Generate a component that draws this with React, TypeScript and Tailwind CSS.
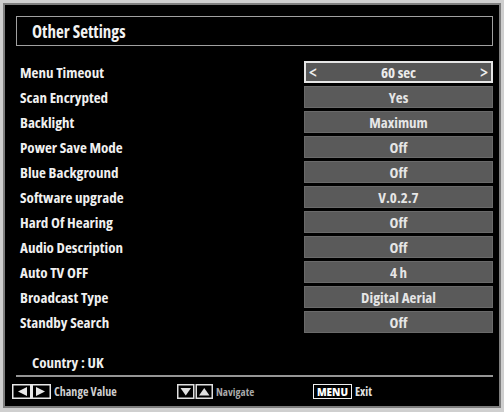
const rows: [string, string][] = [
  ["Menu Timeout", "60 sec"],
  ["Scan Encrypted", "Yes"],
  ["Backlight", "Maximum"],
  ["Power Save Mode", "Off"],
  ["Blue Background", "Off"],
  ["Software upgrade", "V.0.2.7"],
  ["Hard Of Hearing", "Off"],
  ["Audio Description", "Off"],
  ["Auto TV OFF", "4 h"],
  ["Broadcast Type", "Digital Aerial"],
  ["Standby Search", "Off"],
];

function LeftRightIcon() {
  return (
    <svg width="39" height="15" viewBox="0 0 39 15">
      <rect x="0.75" y="0.75" width="37.5" height="13.5" fill="#000" stroke="#e8e8e8" strokeWidth="1.5" />
      <rect x="18" y="0" width="3" height="15" fill="#e8e8e8" />
      <polygon points="15,3 15,12 6,7.5" fill="#e8e8e8" />
      <polygon points="24,3 24,12 33,7.5" fill="#e8e8e8" />
    </svg>
  );
}

function UpDownIcon() {
  return (
    <svg width="36" height="15" viewBox="0 0 36 15">
      <rect x="0.75" y="0.75" width="16" height="13.5" fill="#000" stroke="#e0e0e0" strokeWidth="1.5" />
      <polygon points="3.5,4 14,4 8.75,11.5" fill="#e0e0e0" />
      <rect x="19.25" y="0.75" width="16" height="13.5" fill="#000" stroke="#e0e0e0" strokeWidth="1.5" />
      <polygon points="22,11.5 32.5,11.5 27.25,4" fill="#e0e0e0" />
    </svg>
  );
}

export default function App() {
  return (
    <div
      className="w-[504px] h-[412px] bg-[#cfcfcf] pt-[3px] px-[3px] pb-[4px] [font-stretch:80%]"
      style={{ fontFamily: "'Open Sans', 'DejaVu Sans', sans-serif" }}
    >
      <div className="h-full border-2 border-[#7e7e7e] bg-black flex flex-col">
        <div className="pl-[11px] pr-[6px] flex flex-col">
          <div className="mt-[11px] h-[30px] border-[1.5px] border-[#a0a0a0] flex items-center pl-[15px]">
            <span className="text-[17px] font-bold text-[#f2f2f2] leading-none">Other Settings</span>
          </div>

          <div className="mt-[15px] flex flex-col gap-[3px]">
            {rows.map(([label, value], i) => (
              <div key={label} className="flex items-center h-[22px]">
                <div className="flex-1 pl-[4px] text-[15px] font-bold text-[#f0f0f0] leading-none">{label}</div>
                {i === 0 ? (
                  <div className="w-[189px] h-[22px] bg-[#575757] border-2 border-[#e6e6e6] flex items-center justify-between px-[3px] text-[15px] font-bold text-[#ececec] leading-none">
                    <span className="text-[17px] font-semibold">&lt;</span>
                    <span>{value}</span>
                    <span className="text-[17px] font-semibold">&gt;</span>
                  </div>
                ) : (
                  <div className="w-[189px] h-[22px] bg-[#5a5a5a] border border-[#6a6a6a] flex items-center justify-center text-[15px] font-bold text-[#e6e6e6] leading-none">
                    {value}
                  </div>
                )}
              </div>
            ))}
          </div>

          <div className="mt-[19px] h-[20px] flex items-center pl-[16px] text-[15px] font-bold text-[#eeeeee] leading-none">
            Country : UK
          </div>

          <div className="mt-[3px] h-[2px] bg-[#959595]"></div>
        </div>

        <div className="mt-[7px] pl-[7px] flex items-center h-[15px]">
          <div className="w-[165px] flex items-center gap-[3px]">
            <LeftRightIcon />
            <span className="text-[12px] font-bold text-[#cfcfcf] leading-none">Change Value</span>
          </div>
          <div className="w-[136px] flex items-center gap-[3px]">
            <UpDownIcon />
            <span className="text-[11px] font-bold text-[#a8a8a8] leading-none">Navigate</span>
          </div>
          <div className="flex items-center gap-[3px]">
            <div className="w-[39px] h-[15px] border-[1.5px] border-[#f0f0f0] flex items-center justify-center">
              <span className="text-[10px] font-extrabold text-white leading-none [font-stretch:100%]">MENU</span>
            </div>
            <span className="text-[12px] font-bold text-[#e0e0e0] leading-none">Exit</span>
          </div>
        </div>
      </div>
    </div>
  );
}
